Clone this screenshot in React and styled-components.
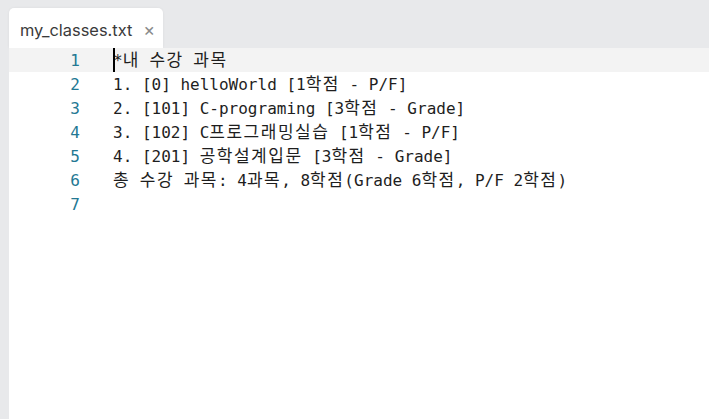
import styled, { createGlobalStyle } from 'styled-components';

const GlobalStyle = createGlobalStyle`
    html, body {
        margin: 0;
        padding: 0;
        height: 100%;
        background-color: #e8e9eb;
    }
    #root {
        height: 100%;
    }
`;

const Window = styled.div`
    display: flex;
    flex-direction: column;
    height: 100vh;
    padding-left: 9px;
    background-color: #e8e9eb;
    box-sizing: border-box;
`;

const TabBar = styled.div`
    display: flex;
    align-items: flex-end;
    height: 48px;
    padding-top: 8px;
    box-sizing: border-box;
`;

const Tab = styled.div`
    display: flex;
    align-items: center;
    gap: 11px;
    height: 40px;
    padding: 0 11px;
    width: 154px;
    box-sizing: border-box;
    background-color: #fff;
    border-radius: 5px 5px 0 0;
    box-shadow: 0 0 3px rgba(0, 0, 0, 0.06);
    font-family: Inter, "Noto Sans", sans-serif;
    font-size: 16.4px;
    color: #3a3a3a;
`;

const TabTitle = styled.span`
    padding-top: 4px;
`;

const Close = styled.span`
    padding-top: 3px;
    font-size: 18px;
    color: #8a8a8a;
    line-height: 1;
`;

const Editor = styled.div`
    flex: 1;
    background-color: #fff;
    font-family: "DejaVu Sans Mono", "Noto Sans CJK KR", monospace;
    font-size: 16px;
`;

const Line = styled.div`
    display: flex;
    align-items: center;
    height: 24px;
    background-color: ${(p) => (p.$current ? '#f3f3f3' : 'transparent')};
`;

const Gutter = styled.span`
    width: 71px;
    text-align: right;
    color: #237893;
    flex-shrink: 0;
`;

const Code = styled.span`
    position: relative;
    margin-left: 33px;
    color: #1e1e1e;
    white-space: pre;
`;

const Hangul = styled.span`
    font-family: "Noto Sans CJK KR", sans-serif;
    font-size: 17px;
    letter-spacing: 1.5px;
    line-height: 1;
`;

const Cursor = styled.span`
    position: absolute;
    left: 0;
    top: -2px;
    width: 2px;
    height: 24px;
    background-color: #000;
`;

const lines = [
    '*내 수강 과목',
    '1. [0] helloWorld [1학점 - P/F]',
    '2. [101] C-programing [3학점 - Grade]',
    '3. [102] C프로그래밍실습 [1학점 - P/F]',
    '4. [201] 공학설계입문 [3학점 - Grade]',
    '총 수강 과목: 4과목, 8학점(Grade 6학점, P/F 2학점)',
    '',
];

const renderText = (text) =>
    text.split(/([가-힣]+)/).map((part, i) =>
        /[가-힣]/.test(part) ? <Hangul key={i}>{part}</Hangul> : part
    );

export default function App() {
    return (
        <>
            <GlobalStyle />
            <Window>
                <TabBar>
                    <Tab>
                        <TabTitle>my_classes.txt</TabTitle>
                        <Close>×</Close>
                    </Tab>
                </TabBar>
                <Editor>
                    {lines.map((text, i) => (
                        <Line key={i} $current={i === 0}>
                            <Gutter>{i + 1}</Gutter>
                            <Code>
                                {i === 0 && <Cursor />}
                                {renderText(text)}
                            </Code>
                        </Line>
                    ))}
                </Editor>
            </Window>
        </>
    );
}
